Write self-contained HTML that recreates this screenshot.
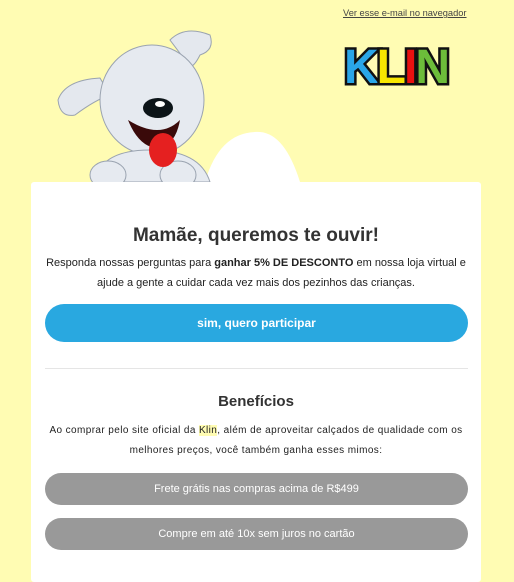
<!DOCTYPE html><html><head><meta charset="utf-8"><style>
body{margin:0;width:514px;height:562px;background:#fffcb3;font-family:"Liberation Sans",sans-serif;position:relative;overflow:hidden}
.a{position:absolute}
.card{left:31px;top:182px;width:450px;height:400px;background:#fff;border-radius:3px}
h1{position:absolute;left:31px;width:450px;top:225px;margin:0;text-align:center;font-size:19px;color:#333;font-weight:bold}
.p{left:31px;width:450px;text-align:center;font-size:11.5px;color:#222;line-height:20px}
.btn{left:45px;width:423px;border-radius:20px;text-align:center;color:#fff}
</style></head><body>
<div class="a" style="left:343px;top:8px;font-size:9.3px;color:#444;text-decoration:underline">Ver esse e-mail no navegador</div>
<svg class="a" style="left:0;top:0" width="514" height="200" viewBox="0 0 514 200">
<path d="M205 182 Q220 130 260 132 Q285 134 300 182Z" fill="#fff"/>
<path d="M170 40 Q185 25 210 35 Q215 50 200 55 Q190 75 185 60Z" fill="#e4e8ee" stroke="#9aa3b0"/>
<path d="M100 78 Q65 80 58 100 Q60 118 75 115 Q95 100 110 95Z" fill="#e4e8ee" stroke="#9aa3b0"/>
<ellipse cx="152" cy="100" rx="52" ry="55" fill="#e6eaf0" stroke="#9aa3b0"/>
<path d="M95 182 Q100 150 150 150 Q200 150 210 182Z" fill="#e6eaf0" stroke="#9aa3b0"/>
<ellipse cx="108" cy="175" rx="18" ry="14" fill="#e6eaf0" stroke="#9aa3b0"/>
<ellipse cx="178" cy="175" rx="18" ry="14" fill="#e6eaf0" stroke="#9aa3b0"/>
<ellipse cx="158" cy="108" rx="15" ry="10" fill="#0c1418"/>
<ellipse cx="160" cy="104" rx="5" ry="3" fill="#fff"/>
<path d="M128 120 Q160 140 180 120 Q175 148 155 148 Q138 145 128 120Z" fill="#3a0a0a"/>
<ellipse cx="163" cy="150" rx="14" ry="17" fill="#e52020"/>
</svg>
<div class="a" style="left:344px;top:40px;font-size:48px;font-weight:900;letter-spacing:-2px;-webkit-text-stroke:5px #111;paint-order:stroke fill"><span style="color:#2aa6e8">K</span><span style="color:#f7e600">L</span><span style="color:#e81010">I</span><span style="color:#6cbc3a">N</span></div>
<div class="a card"></div>
<h1>Mamãe, queremos te ouvir!</h1>
<div class="a p" style="top:253px;font-size:11px">Responda nossas perguntas para <b>ganhar 5% DE DESCONTO</b> em nossa loja virtual e<br>ajude a gente a cuidar cada vez mais dos pezinhos das crianças.</div>
<div class="a btn" style="top:304px;height:38px;line-height:38px;background:#29a8e0;font-weight:bold;font-size:12px">sim, quero participar</div>
<div class="a" style="left:45px;width:423px;top:368px;border-top:1px solid #e5e5e5"></div>
<div class="a" style="left:31px;width:450px;top:393px;text-align:center;font-size:15px;font-weight:bold;color:#333">Benefícios</div>
<div class="a p" style="top:421px;font-size:10px;letter-spacing:.4px">Ao comprar pelo site oficial da <span style="background:#fffcb3">Klin</span>, além de aproveitar calçados de qualidade com os<br>melhores preços, você também ganha esses mimos:</div>
<div class="a btn" style="top:473px;height:32px;line-height:32px;background:#999;font-size:11px">Frete grátis nas compras acima de R$499</div>
<div class="a btn" style="top:518px;height:32px;line-height:32px;background:#999;font-size:11px">Compre em até 10x sem juros no cartão</div>
</body></html>
